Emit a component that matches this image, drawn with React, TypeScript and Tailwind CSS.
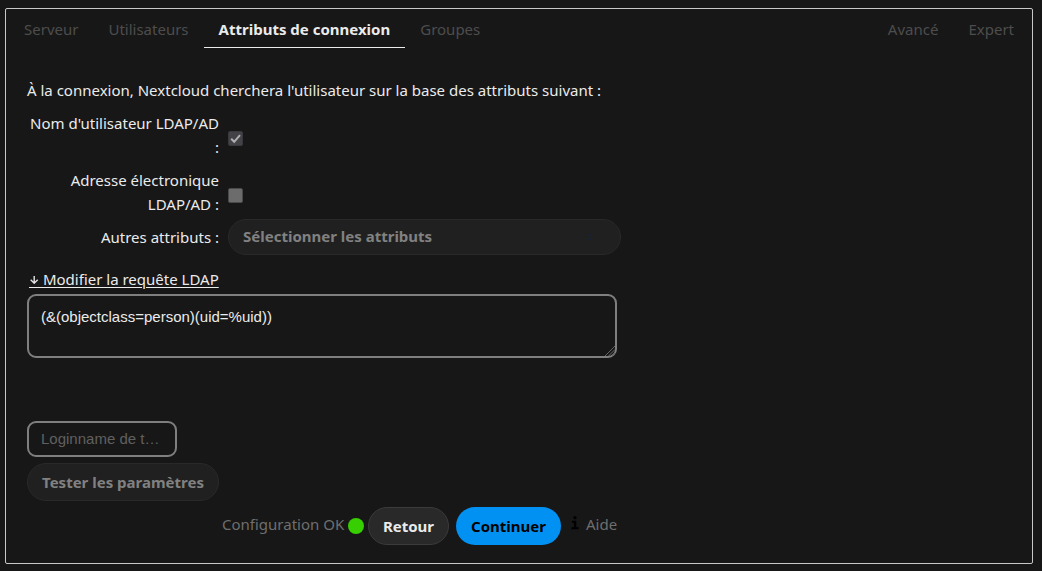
import React from 'react';

const tabBase = 'h-[39px] px-[15px] pt-[8px] whitespace-nowrap';

function Tab({ label, active = false }: { label: string; active?: boolean }) {
  return (
    <li
      className={
        active
          ? `${tabBase} border-b border-[#ebebeb] font-bold text-[#ebebeb]`
          : `${tabBase} text-[#4d4d4d]`
      }
    >
      {label}
    </li>
  );
}

function Checkbox({ checked = false }: { checked?: boolean }) {
  return (
    <span
      role="checkbox"
      aria-checked={checked}
      className={
        checked
          ? 'block size-[15px] rounded-[2px] border border-[#38383d] bg-[#434347]'
          : 'block size-[15px] rounded-[2px] border border-[#4a4a4a] bg-[#6c6c6c]'
      }
    >
      {checked && (
        <svg viewBox="0 0 13 13" className="block size-[13px]" fill="none" stroke="#b0b0b0" strokeWidth="2">
          <path d="M2.2 6.7 L5.2 9.8 L11 3.2" />
        </svg>
      )}
    </span>
  );
}

export default function App() {
  return (
    <div className="h-[571px] w-[1042px] bg-[#171717] pt-2 pl-[5px] font-['Noto_Sans',sans-serif] text-[15px] leading-6 text-[#ebebeb]">
      <div className="h-[556px] w-[1028px] rounded-[2px] border border-[#c8c8c8]">
        <ul className="flex pl-[3px] pr-[3px]">
          <Tab label="Serveur" />
          <Tab label="Utilisateurs" />
          <Tab label="Attributs de connexion" active />
          <Tab label="Groupes" />
          <li className="grow" />
          <Tab label="Avancé" />
          <Tab label="Expert" />
        </ul>

        <div className="flex flex-col items-start pl-[21px] pt-[30px]">
          <p>À la connexion, Nextcloud cherchera l'utilisateur sur la base des attributs suivant :</p>

          <div className="mt-[9px] flex">
            <label className="w-[192px] text-right">Nom d'utilisateur LDAP/AD :</label>
            <div className="pl-[9px] pt-[20px]"><Checkbox checked /></div>
          </div>
          <div className="mt-[9px] flex">
            <label className="w-[192px] text-right">Adresse électronique LDAP/AD :</label>
            <div className="pl-[9px] pt-[20px]"><Checkbox /></div>
          </div>
          <div className="mt-[3px] flex">
            <label className="w-[192px] pt-[6px] text-right">Autres attributs :</label>
            <button className="ml-[9px] flex h-9 w-[393px] items-center justify-between rounded-full border border-[#292929] bg-[#202020] pl-[14px] pr-[27px] font-bold text-[#818181]">
              <span className="-mt-[3px]">Sélectionner les attributs</span>
              <svg viewBox="0 0 6 8" className="h-2 w-1.5" fill="#1a2332">
                <path d="M3 0 L5.5 3 H.5Z M.5 5 H5.5 L3 8Z" />
              </svg>
            </button>
          </div>

          <a className="ml-[2px] mt-[12px] flex h-[21px]">
            <span className="h-[21px] w-[10px] border-b border-[#ebebeb] pt-[9px]">
              <svg viewBox="0 0 10 8" className="h-2 w-[10px]" fill="none" stroke="#e4e4e4" strokeWidth="1.4">
                <path d="M5.2 0 V7.2 M1.7 3.8 L5.2 7.2 L8.7 3.8" />
              </svg>
            </span>
            <span className="underline decoration-1 underline-offset-[2px]">&nbsp;Modifier la requête LDAP</span>
          </a>
          <div className="mt-[6px] flex h-16 w-[590px] items-end justify-between rounded-[9px] border-2 border-[#7f7f7f] pl-3 font-['Liberation_Sans',sans-serif]">
            <span className="self-start pt-[9px]">(&amp;(objectclass=person)(uid=%uid))</span>
            <svg viewBox="0 0 11 11" className="size-[11px]" fill="none" stroke="#666666">
              <path d="M1 11 L11 1 M4.5 11 L11 4.5 M8 11 L11 8" />
            </svg>
          </div>

          <div className="mt-[63px] flex h-9 w-[150px] items-center rounded-[9px] border-2 border-[#7f7f7f] px-3 font-['Liberation_Sans',sans-serif] text-[#606060]">
            Loginname de t…
          </div>
          <button className="mt-[6px] h-[38px] w-[192px] rounded-full border border-[#292929] bg-[#202020] pb-px font-bold text-[#818181]">
            Tester les paramètres
          </button>

          <div className="mt-[6px] flex h-[38px] pl-[195px] text-[#6e6e6e]">
            <span className="w-[126px] whitespace-nowrap pt-[5px]">Configuration OK</span>
            <span className="mt-[11px] size-4 rounded-full bg-[#37ce02]" />
            <button className="ml-1 h-[38px] w-[81px] rounded-full border border-[#3b3b3b] bg-[#292929] pb-px font-bold text-[#ebebeb]">
              Retour
            </button>
            <button className="ml-[7px] h-[38px] w-[105px] rounded-full bg-[#0091f2] pb-px font-bold text-black">
              Continuer
            </button>
            <svg viewBox="0 0 8 14" className="ml-[10px] mt-[9px] h-[14px] w-2" fill="#000000">
              <circle cx="4" cy="1.7" r="1.6" />
              <path d="M1 4.8H5.3V11.2H7.6V13.2H.4V11.2H2.9V6.8H1Z" />
            </svg>
            <span className="ml-[7px] pt-[5px]">Aide</span>
          </div>
        </div>
      </div>
    </div>
  );
}
